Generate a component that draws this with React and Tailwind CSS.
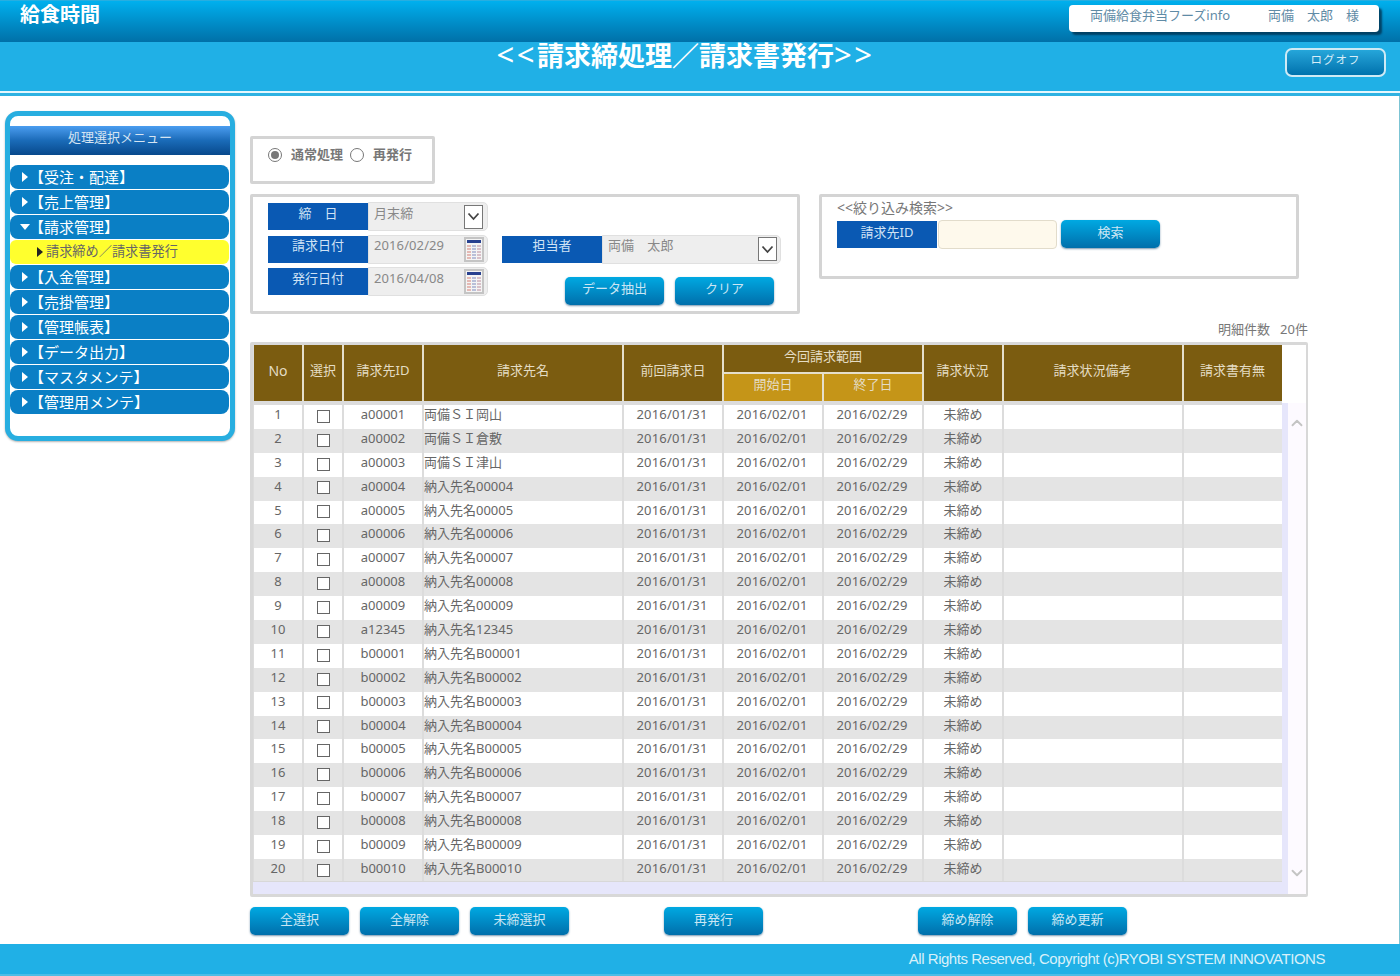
import React from 'react'
import { ChevronUp, ChevronDown } from 'lucide-react'

const MENU = ['【受注・配達】', '【売上管理】', '【請求管理】', '【入金管理】', '【売掛管理】', '【管理帳表】', '【データ出力】', '【マスタメンテ】', '【管理用メンテ】']

const NAMES = ['両備ＳＩ岡山', '両備ＳＩ倉敷', '両備ＳＩ津山']
const IDS = ['a00001', 'a00002', 'a00003', 'a00004', 'a00005', 'a00006', 'a00007', 'a00008', 'a00009', 'a12345', 'b00001', 'b00002', 'b00003', 'b00004', 'b00005', 'b00006', 'b00007', 'b00008', 'b00009', 'b00010']

const COLS = 'grid grid-cols-[48px_38px_78px_198px_98px_98px_98px_78px_178px_98px] gap-x-[2px]'
const BTN = 'w-[99px] h-[28px] pb-[3px] rounded-[5px] bg-gradient-to-b from-[#00a9e2] to-[#006fab] text-[#cbe6f4] text-[13px] shadow-[0_1px_2px_rgba(30,80,120,0.6)]'
const LABEL = 'w-[100px] h-[27px] pb-[6px] bg-[#0a59b3] text-[#cfe2f5] text-[13px] flex items-center justify-center shrink-0'

function Triangle({ open, dark }) {
  if (open) return <span className="w-0 h-0 border-x-[5px] border-x-transparent border-t-[6px] border-t-white" />
  return <span className={`w-0 h-0 border-y-[5px] border-y-transparent border-l-[6px] ${dark ? 'border-l-[#222]' : 'border-l-white'}`} />
}

function SelectArrow() {
  return (
    <span className="w-[19px] h-[24px] bg-white border border-[#777] flex items-center justify-center shrink-0">
      <svg width="13" height="9" viewBox="0 0 13 9"><path d="M1.5 1.5 L6.5 7 L11.5 1.5" fill="none" stroke="#444" strokeWidth="1.8" /></svg>
    </span>
  )
}

function CalendarIcon() {
  return (
    <svg width="20" height="25" viewBox="0 0 20 25" className="shrink-0">
      <rect width="20" height="25" fill="#c4c4c4" />
      <rect x="2" y="2" width="16" height="21" fill="#f4f4f4" />
      <rect x="3" y="3" width="14" height="3" fill="#27408f" />
      {[8, 11, 14, 17, 20].map((y) => (
        <g key={y}>
          <rect x="3" y={y} width="4" height="2" fill="#e4b9b4" />
          <rect x="8" y={y} width="4" height="2" fill="#b9bfd8" />
          <rect x="13" y={y} width="4" height="2" fill="#d8c0c8" />
        </g>
      ))}
    </svg>
  )
}

function Field({ w, text, icon }) {
  return (
    <div className={`${w} h-[29px] -my-px bg-[#eeeeee] border border-[#e0e0e0] rounded-r-[5px] flex items-center justify-between pl-[5px] pr-[3px]`}>
      <span className="text-[13px] tracking-[0.1px] text-[#888] pb-[6px] whitespace-pre">{text}</span>
      {icon}
    </div>
  )
}

function Sidebar() {
  return (
    <aside className="ml-[5px] mt-[15px] w-[230px] h-[330px] border-[5px] border-[#28aee0] rounded-[13px] bg-white pt-[10px] shadow-[0_1px_2px_rgba(0,0,0,0.3)] shrink-0">
      <div className="h-[29px] bg-gradient-to-b from-[#4a9df0] via-[#1a6bb8] to-[#07498c] flex items-center justify-center text-[13px] text-[#d5e4f2] pb-[5px]">処理選択メニュー</div>
      <div className="mt-[10px] w-[219px] flex flex-col gap-px">
        {MENU.map((m) => (
          <React.Fragment key={m}>
            <div className="h-[24px] rounded-[8px] bg-[#0a7fc5] flex items-center pl-[10px] text-white text-[15px]">
              <span className="w-[10px] flex justify-center"><Triangle open={m === '【請求管理】'} /></span>
              <span className="-ml-px pt-[1px]">{m}</span>
            </div>
            {m === '【請求管理】' && (
              <div className="h-[24px] rounded-[6px] bg-[#ffff2e] flex items-center pl-[27px] gap-[3px] text-[13.2px] text-[#666]">
                <Triangle dark />
                <span>請求締め／請求書発行</span>
              </div>
            )}
          </React.Fragment>
        ))}
      </div>
    </aside>
  )
}

function Radio({ on }) {
  return (
    <span className="w-[14px] h-[14px] rounded-full border border-[#777] bg-white flex items-center justify-center shrink-0">
      {on && <span className="w-[8px] h-[8px] rounded-full bg-[#777]" />}
    </span>
  )
}

function DetailTable() {
  return (
    <div className="mt-0 w-[1058px] h-[555px] border-[3px] border-[#d8d8d8] rounded-[2px] flex bg-white">
      <div className="w-[1029px] flex flex-col bg-[#dcdcdc] pl-px">
        <div className={`${COLS} grid-rows-[27px_27px] gap-y-[2px] h-[56px] bg-[#e6dfcb] text-[13px] text-[#e4dcc4]`}>
          {['No', '選択', '請求先ID', '請求先名', '前回請求日'].map((h) => (
            <div key={h} className={`row-span-2 bg-[#7b5c10] flex items-center justify-center pb-[5px] ${h === 'No' ? 'text-[14px]' : ''}`}>{h}</div>
          ))}
          <div className="col-span-2 bg-[#7b5c10] flex items-center justify-center pb-[3px]">今回請求範囲</div>
          {['請求状況', '請求状況備考', '請求書有無'].map((h) => (
            <div key={h} className="row-span-2 bg-[#7b5c10] pr-px flex items-center justify-center pb-[5px]">{h}</div>
          ))}
          <div className="bg-[#c59518] flex items-center justify-center pb-[5px]">開始日</div>
          <div className="bg-[#c59518] flex items-center justify-center pb-[5px]">終了日</div>
        </div>
        <div className="h-[4px]" />
        <div className="flex flex-col gap-y-[2px]">
          {IDS.map((id, i) => {
            const cell = `${i % 2 ? 'bg-[#e4e4e4]' : 'bg-white'} flex items-center justify-center pb-[5px]`
            const name = NAMES[i] || (i < 10 ? `納入先名${id === 'a12345' ? '12345' : id.slice(1)}` : `納入先名B${id.slice(1)}`)
            return (
              <div key={id} className={`${COLS} h-[21.9px] text-[13px] text-[#666]`}>
                <div className={cell}>{i + 1}</div>
                <div className={`${i % 2 ? 'bg-[#e4e4e4]' : 'bg-white'} flex items-center justify-center pb-[2px]`}>
                  <input type="checkbox" readOnly className="appearance-none w-[13px] h-[13px] border border-[#666] bg-white" />
                </div>
                <div className={cell}>{id}</div>
                <div className={`${cell} !justify-start`}>{name}</div>
                <div className={`${cell} pr-[2px] tracking-[0.2px]`}>2016/01/31</div>
                <div className={`${cell} pr-[2px] tracking-[0.2px]`}>2016/02/01</div>
                <div className={`${cell} pr-[2px] tracking-[0.2px]`}>2016/02/29</div>
                <div className={cell}>未締め</div>
                <div className={cell} />
                <div className={cell} />
              </div>
            )
          })}
        </div>
        <div className="flex-1 -ml-px bg-[#e6e6fb] border-t border-[#d8d8d8]" />
      </div>
      <div className="flex-1 flex flex-col">
        <div className="h-[58px] bg-white" />
        <div className="flex-1 flex">
          <div className="w-[6px] bg-[#e6e6fb]" />
          <div className="flex-1 bg-[#fdfaff] flex flex-col justify-between items-center pt-[11px] pb-[12px]">
            <ChevronUp size={18} strokeWidth={2.5} className="text-[#c4c4c4]" />
            <ChevronDown size={18} strokeWidth={2.5} className="text-[#c4c4c4]" />
          </div>
        </div>
      </div>
    </div>
  )
}

export default function App() {
  return (
    <div className="w-[1400px] h-[976px] flex flex-col bg-white font-['Noto_Sans','Noto_Sans_CJK_JP',sans-serif] text-[#666] overflow-hidden">
      {/* Header */}
      <header className="h-[42px] bg-gradient-to-b from-[#00b0ee] to-[#0070a8] flex justify-between shrink-0 border-t border-[#28aee0]">
        <div className="ml-[20px] text-[20px] leading-[28px] font-bold text-white">給食時間</div>
        <div className="mt-[4px] mr-[21px] w-[310px] h-[27px] bg-white rounded-[4px] shadow-[3px_3px_2px_rgba(0,50,80,0.8)] flex items-center pb-[5px] text-[13px] text-[#5f8ba6]">
          <span className="ml-[21px] w-[178px]">両備給食弁当フーズinfo</span>
          <span className="whitespace-pre">両備　太郎　様</span>
        </div>
      </header>
      <div className="h-[49px] bg-[#20b0e6] flex shrink-0">
        <div className="flex-1 pl-[86px] -mt-[2px] text-center text-[27px] leading-[28px] font-bold text-white whitespace-nowrap">
          <span className="font-normal text-[31px] tracking-[2.5px]">&lt;&lt;</span>請求締処理／請求書発行<span className="font-normal text-[31px] tracking-[2.5px]">&gt;&gt;</span>
        </div>
        <button className="mt-[6px] mr-[14px] w-[101px] h-[29px] pb-[6px] rounded-[7px] border-2 border-[#cfeaf5] bg-gradient-to-b from-[#25a6da] to-[#0072ad] text-[11.5px] tracking-[1px] text-[#d8eef8]">ログオフ</button>
      </div>
      <div className="h-[2px] bg-[#e6f7fd] shrink-0" />
      <div className="h-[3px] bg-[#2fb2e2] shrink-0" />

      {/* Body */}
      <div className="flex-1 flex border-r border-[#7cc4d4]">
        <Sidebar />
        <main className="ml-[15px] w-[1058px] pt-[40px]">
          <div className="w-[185px] h-[48px] border-[3px] border-[#d4d4d4] rounded-[2px] flex items-start pt-[9px] pl-[15px] text-[13px] font-semibold text-[#777]">
            <Radio on />
            <span className="ml-[9px] -mt-[3px]">通常処理</span>
            <span className="ml-[7px]"><Radio /></span>
            <span className="ml-[9px] -mt-[3px]">再発行</span>
          </div>

          <div className="mt-[10px] flex items-start gap-[19px]">
            <section className="w-[550px] h-[120px] border-[3px] border-[#d4d4d4] rounded-[2px] pl-[15px] pt-[6px] flex">
              <div className="flex flex-col gap-[5.5px]">
                <div className="flex">
                  <div className={LABEL}>締　日</div>
                  <Field w="w-[120px]" text="月末締" icon={<span className="mr-px"><SelectArrow /></span>} />
                </div>
                <div className="flex">
                  <div className={LABEL}>請求日付</div>
                  <Field w="w-[120px]" text="2016/02/29" icon={<CalendarIcon />} />
                </div>
                <div className="flex">
                  <div className={LABEL}>発行日付</div>
                  <Field w="w-[120px]" text="2016/04/08" icon={<CalendarIcon />} />
                </div>
              </div>
              <div className="ml-[14px] pt-[32.5px]">
                <div className="flex">
                  <div className={LABEL}>担当者</div>
                  <Field w="w-[179px]" text="両備　太郎" icon={<SelectArrow />} />
                </div>
                <div className="mt-[14px] pr-[7px] flex justify-end gap-[11px]">
                  <button className={BTN}>データ抽出</button>
                  <button className={BTN}>クリア</button>
                </div>
              </div>
            </section>
            <section className="w-[480px] h-[85px] border-[3px] border-[#d4d4d4] rounded-[2px] pl-[15px]">
              <div className="h-[23px] text-[14px] leading-[22px] text-[#777]">&lt;&lt;絞り込み検索&gt;&gt;</div>
              <div className="flex items-start">
                <div className={`${LABEL} !pb-[4px] mt-px`}>請求先ID</div>
                <div className="w-[119px] h-[29px] ml-px bg-[#fef9ec] border border-[#e2dccb] rounded-[4px]" />
                <button className={`${BTN} ml-[4px]`}>検索</button>
              </div>
            </section>
          </div>

          <div className="h-[28px] pt-[5px] text-right text-[13px] leading-[20px] text-[#777] whitespace-pre">明細件数   20件</div>
          <DetailTable />

          <div className="mt-[10px] flex">
            <button className={BTN}>全選択</button>
            <button className={`${BTN} ml-[11px]`}>全解除</button>
            <button className={`${BTN} ml-[11px]`}>未締選択</button>
            <button className={`${BTN} ml-[95px]`}>再発行</button>
            <button className={`${BTN} ml-[155px]`}>締め解除</button>
            <button className={`${BTN} ml-[11px]`}>締め更新</button>
          </div>
        </main>
      </div>

      {/* Footer */}
      <footer className="h-[32px] bg-[#20b0e6] border-b-2 border-[#4cbde6] shrink-0 flex items-center justify-end pr-[75px] font-['Liberation_Sans',sans-serif] text-[15px] tracking-[-0.47px] text-[#d8f0fa]">
        All Rights Reserved, Copyright (c)RYOBI SYSTEM INNOVATIONS
      </footer>
    </div>
  )
}
